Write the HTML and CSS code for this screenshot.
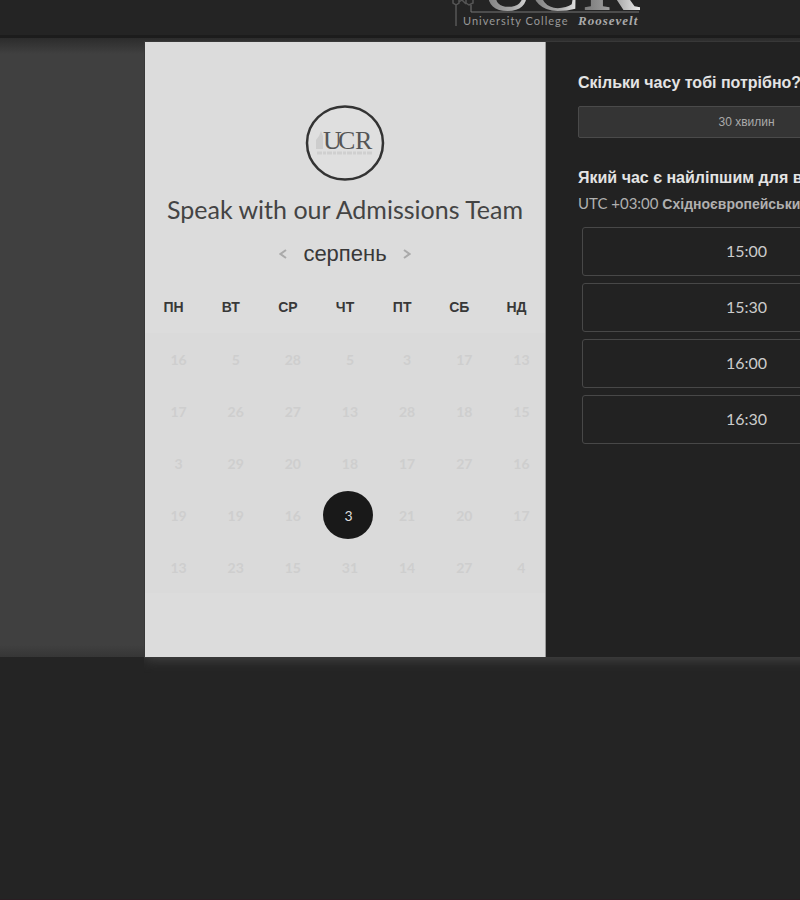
FILE: index.html
```html
<!DOCTYPE html>
<html lang="uk">
<head>
<meta charset="utf-8">
<title>Speak with our Admissions Team</title>
<link rel="stylesheet" href="styles.css">
</head>
<body>
<div class="page">
  <header class="top">
    <svg class="brand" width="188" height="32" viewBox="0 0 188 32" role="img" aria-label="University College Roosevelt">
      <defs>
        <linearGradient id="metal" x1="0" x2="1" y1="0" y2="0">
          <stop offset="0" stop-color="#777"/><stop offset=".6" stop-color="#aaa"/><stop offset="1" stop-color="#eee"/>
        </linearGradient>
      </defs>
      <g fill="none" stroke="#555" stroke-width="1.5">
        <path d="M1 0v3l3 2v21M7 0v3l-3 2M7 2l3-2 4 4M14 0v3l3 2 4-2V0"/>
        <path d="M19 5v7h168" stroke="#777" stroke-width="1"/>
      </g>
      <g font-family="Liberation Serif, serif" fill="url(#metal)">
        <text x="28" y="10" font-size="76">U</text>
        <text x="77" y="10" font-size="76">C</text>
        <text x="131" y="10" font-size="78" font-weight="bold">R</text>
      </g>
      <text class="brand-name" x="11" y="25">University College</text>
      <text class="brand-last" x="126" y="25">Roosevelt</text>
    </svg>
  </header>
  <main class="band">
    <div class="card">
      <section class="calendar">
        <svg class="badge" width="80" height="76" viewBox="0 0 80 76" role="img" aria-label="UCR">
          <ellipse cx="40" cy="38" rx="38" ry="36.500" fill="#dfdfdf" stroke="#333" stroke-width="2.500"/>
          <path d="M11 44v-9l3-4 2-5 2 5v13z" fill="#cdcdcd"/>
          <g font-family="Liberation Serif, serif" font-size="26" fill="#555">
            <text x="18" y="44">U</text><text x="33" y="44">C</text><text x="50" y="44">R</text>
          </g>
          <path d="M12 48h56" stroke="#cfcfcf" stroke-width="3" stroke-dasharray="5 1 3 1"/>
        </svg>
        <h1>Speak with our Admissions Team</h1>
        <div class="month">
          <button type="button" aria-label="Попередній місяць"><svg width="8" height="12" viewBox="0 0 8 12"><path d="M7 2 1.500 6 7 10"/></svg></button>
          <h2>серпень</h2>
          <button type="button" aria-label="Наступний місяць"><svg width="8" height="12" viewBox="0 0 8 12"><path d="M1 2 6.500 6 1 10"/></svg></button>
        </div>
        <table>
          <thead><tr><th>ПН</th><th>ВТ</th><th>СР</th><th>ЧТ</th><th>ПТ</th><th>СБ</th><th>НД</th></tr></thead>
          <tbody>
            <tr><td>16</td><td>5</td><td>28</td><td>5</td><td>3</td><td>17</td><td>13</td></tr>
            <tr><td>17</td><td>26</td><td>27</td><td>13</td><td>28</td><td>18</td><td>15</td></tr>
            <tr><td>3</td><td>29</td><td>20</td><td>18</td><td>17</td><td>27</td><td>16</td></tr>
            <tr><td>19</td><td>19</td><td>16</td><td class="picked"><button type="button">3</button></td><td>21</td><td>20</td><td>17</td></tr>
            <tr><td>13</td><td>23</td><td>15</td><td>31</td><td>14</td><td>27</td><td>4</td></tr>
          </tbody>
        </table>
      </section>
      <section class="times">
        <h3>Скільки часу тобі потрібно?</h3>
        <button type="button" class="duration">30 хвилин</button>
        <h3>Який час є найліпшим для вас?</h3>
        <p class="zone">UTC +03:00 <b>Східноєвропейський час</b></p>
        <div class="slots">
          <button type="button">15:00</button>
          <button type="button">15:30</button>
          <button type="button">16:00</button>
          <button type="button">16:30</button>
        </div>
      </section>
    </div>
  </main>
</div>
</body>
</html>
```
FILE: styles.css
```css
* { box-sizing: border-box; }
html { background: #242424; }
body {
  margin: 0;
  overflow-x: hidden;
  background: #242424;
  font-family: "Liberation Sans", Arial, sans-serif;
}
h1, h2, h3, p { margin: 0; }
button { font: inherit; cursor: pointer; }
.page {
  min-width: 1092px;
  min-height: 100vh;
  border-bottom: 1px solid #2a1d22;
}
.top {
  display: flex;
  justify-content: center;
  height: 38px;
  border-bottom: 3px solid #1c1c1c;
}
.brand { display: block; }
.brand-name { font: 11px Lato, sans-serif; letter-spacing: 1px; fill: #999; }
.brand-last { font: italic bold 13px "Liberation Serif", serif; letter-spacing: 1px; fill: #aaa; }
.band {
  padding-top: 4px;
  background: linear-gradient(#2c2c2c, #404040 16px, #404040 calc(100% - 12px), #363636);
}
.card {
  display: grid;
  grid-template-columns: minmax(0, 1fr) minmax(0, 1fr);
  max-width: 802px;
  margin: 0 auto;
  box-shadow: 0 0 0 1px #383838, 0 2px 12px #484848;
  clip-path: inset(-1px -1px -16px -1px);
}
.calendar {
  display: flex;
  flex-direction: column;
  align-items: center;
  padding: 63px 0 64px;
  background: #dcdcdc;
  border-right: 1px solid #999;
}
.badge { display: block; }
h1 {
  margin-top: 11px;
  font: 25px/34px Lato, sans-serif;
  color: #444;
  white-space: nowrap;
}
.month {
  display: flex;
  align-items: center;
  gap: 16px;
  margin-top: 14px;
}
.month h2 { font-size: 22px; line-height: 28px; font-weight: 400; color: #383838; }
.month button { padding: 0; border: 0; background: none; display: flex; }
.month path { fill: none; stroke: #aaa; stroke-width: 2; }
table {
  width: 100%;
  margin-top: 18px;
  table-layout: fixed;
  border-collapse: collapse;
  text-align: center;
}
th { height: 47px; padding: 0 0 6px; font-size: 14px; color: #383838; }
td {
  height: 52px;
  padding: 0 0 0 10px;
  font: 14px Lato, sans-serif;
  font-weight: 700;
  color: #cecece;
}
tbody { background: #dadada; }
.picked { padding: 0 0 0 7px; }
.picked button {
  width: 50px;
  height: 48px;
  padding: 0;
  border: 0;
  border-radius: 50%;
  background: #191919;
  color: #ddd;
  font-weight: 400;
  vertical-align: middle;
}
.times {
  padding: 29px 32px;
  background: #222;
}
h3 { font-size: 16px; line-height: 24px; color: #e4e4e4; white-space: nowrap; }
.duration {
  display: block;
  width: 100%;
  height: 32px;
  margin: 11px 0 28px;
  border: 1px solid #4a4a4a;
  border-radius: 2px;
  background: #343434;
  color: #aaa;
  font-size: 12px;
}
.zone { font: 15px/26px Lato, sans-serif; color: #b0b0b0; white-space: nowrap; }
.zone b { font: bold 14px "Liberation Sans", Arial, sans-serif; }
.slots { display: flex; flex-direction: column; gap: 7px; padding: 11px 4px 0; }
.slots button {
  height: 49px;
  padding: 0 0 2px;
  border: 1px solid #484848;
  border-radius: 3px;
  background: #222;
  color: #ccc;
  font: 16px Lato, sans-serif;
}
```
